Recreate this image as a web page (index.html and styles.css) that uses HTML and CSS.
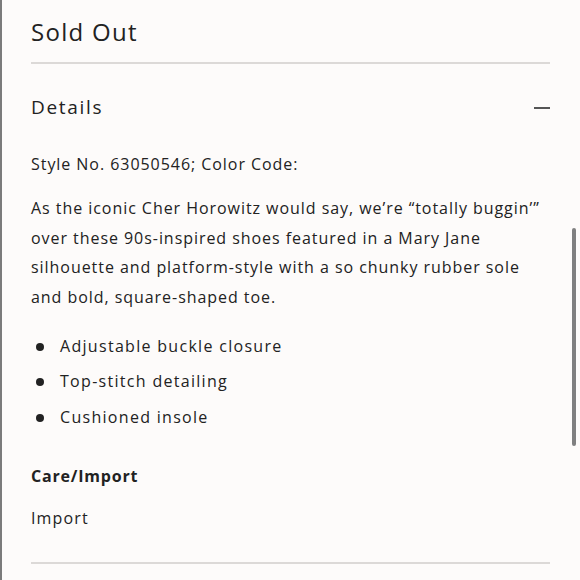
FILE: index.html
```html
<!DOCTYPE html>
<html>
<head>
<meta charset="utf-8">
<link rel="stylesheet" href="styles.css">
</head>
<body>
<div class="page">
  <div class="content">
    <h1 class="status">Sold Out</h1>
    <div class="rule"></div>
    <div class="acc-head">
      <h2 class="acc-title">Details</h2>
      <span class="minus"></span>
    </div>
    <p class="style-no">Style No. 63050546; Color Code:</p>
    <p class="desc">As the iconic Cher Horowitz would say, we’re “totally buggin’”<br>over these 90s-inspired shoes featured in a Mary Jane<br>silhouette and platform-style with a so chunky rubber sole<br>and bold, square-shaped toe.</p>
    <ul class="bullets">
      <li>Adjustable buckle closure</li>
      <li>Top-stitch detailing</li>
      <li>Cushioned insole</li>
    </ul>
    <h3 class="care">Care/Import</h3>
    <p class="import">Import</p>
    <div class="rule bottom"></div>
  </div>
  <div class="scrollbar"></div>
</div>
</body>
</html>
```
FILE: styles.css
```css
html, body {
  margin: 0;
  padding: 0;
  height: 100%;
  overflow: hidden;
}
body {
  background: #fdfbfa;
  font-family: "Open Sans", "Noto Sans", sans-serif;
  color: #222;
}
.page {
  position: relative;
  height: 580px;
  border-left: 2px solid #7b7b7b;
  box-sizing: border-box;
}
.content {
  padding: 0 30px 0 29px;
}
.status {
  margin: 0;
  padding-top: 15px;
  font-size: 24px;
  font-weight: 400;
  letter-spacing: 1.3px;
  line-height: 34px;
  height: 47px;
}
.rule {
  height: 2px;
  background: #dcd9d7;
}
.acc-head {
  display: flex;
  align-items: center;
  justify-content: space-between;
  margin-top: 29px;
  height: 28px;
}
.acc-title {
  margin: 0;
  font-size: 19px;
  font-weight: 400;
  letter-spacing: 1.7px;
}
.minus {
  width: 16px;
  height: 2px;
  background: #555;
  margin-top: 1px;
}
.style-no {
  margin: 28px 0 0;
  font-size: 16px;
  line-height: 30px;
  letter-spacing: 0.95px;
}
.desc {
  margin: 15px -4px 0 0;
  font-size: 16px;
  line-height: 29.7px;
  letter-spacing: 0.95px;
  white-space: nowrap;
}
.bullets {
  margin: 16px 0 0;
  padding: 0 0 0 29px;
  font-size: 16px;
  letter-spacing: 1.3px;
  list-style: none;
}
.bullets li {
  position: relative;
  line-height: 35.5px;
}
.bullets li::before {
  content: "";
  position: absolute;
  left: -24px;
  top: 14px;
  width: 8px;
  height: 8px;
  border-radius: 50%;
  background: #222;
}
.care {
  margin: 26px 0 0;
  font-size: 16px;
  font-weight: 700;
  line-height: 30px;
  letter-spacing: 0.8px;
}
.import {
  margin: 12px 0 0;
  font-size: 16px;
  line-height: 30px;
  letter-spacing: 1.15px;
}
.rule.bottom {
  margin-top: 29px;
}
.scrollbar {
  position: absolute;
  right: 4px;
  top: 228px;
  width: 4px;
  height: 218px;
  border-radius: 2px;
  background: #808080;
}
```
